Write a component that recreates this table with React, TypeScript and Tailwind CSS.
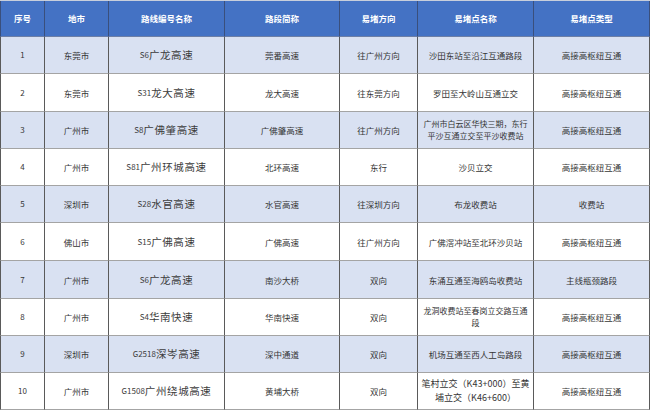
import React from "react";

const cols = "grid-cols-[45px_64px_116px_115px_78px_116px_116px]";

const headers = ["序号", "地市", "路线编号名称", "路段简称", "易堵方向", "易堵点名称", "易堵点类型"];

type Row = {
  no: string;
  city: string;
  code: string;
  road: string;
  short: string;
  dir: string;
  spot: React.ReactNode;
  kind: string;
  h: string;
};

const rows: Row[] = [
  { no: "1", city: "东莞市", code: "S6", road: "广龙高速", short: "莞番高速", dir: "往广州方向", spot: "沙田东站至沿江互通路段", kind: "高接高枢纽互通", h: "h-[37px]" },
  { no: "2", city: "东莞市", code: "S31", road: "龙大高速", short: "龙大高速", dir: "往东莞方向", spot: "罗田至大岭山互通立交", kind: "高接高枢纽互通", h: "h-[38px]" },
  {
    no: "3",
    city: "广州市",
    code: "S8",
    road: "广佛肇高速",
    short: "广佛肇高速",
    dir: "往广州方向",
    spot: (
      <span className="text-[8px]">
        广州市白云区华快三期，东行
        <br />
        平沙互通立交至平沙收费站
      </span>
    ),
    kind: "高接高枢纽互通",
    h: "h-[37px]",
  },
  { no: "4", city: "广州市", code: "S81", road: "广州环城高速", short: "北环高速", dir: "东行", spot: "沙贝立交", kind: "高接高枢纽互通", h: "h-[37px]" },
  { no: "5", city: "深圳市", code: "S28", road: "水官高速", short: "水官高速", dir: "往深圳方向", spot: "布龙收费站", kind: "收费站", h: "h-[37px]" },
  { no: "6", city: "佛山市", code: "S15", road: "广佛高速", short: "广佛高速", dir: "往广州方向", spot: "广佛滘冲站至北环沙贝站", kind: "高接高枢纽互通", h: "h-[38px]" },
  { no: "7", city: "广州市", code: "S6", road: "广龙高速", short: "南沙大桥", dir: "双向", spot: "东涌互通至海鸥岛收费站", kind: "主线瓶颈路段", h: "h-[38px]" },
  {
    no: "8",
    city: "广州市",
    code: "S4",
    road: "华南快速",
    short: "华南快速",
    dir: "双向",
    spot: (
      <span className="text-[8px]">
        龙洞收费站至春岗立交路互通
        <br />
        段
      </span>
    ),
    kind: "高接高枢纽互通",
    h: "h-[37px]",
  },
  { no: "9", city: "深圳市", code: "G2518", road: "深岑高速", short: "深中通道", dir: "双向", spot: "机场互通至西人工岛路段", kind: "高接高枢纽互通", h: "h-[37px]" },
  {
    no: "10",
    city: "广州市",
    code: "G1508",
    road: "广州绕城高速",
    short: "黄埔大桥",
    dir: "双向",
    spot: (
      <span className="text-[9px] leading-[14px]">
        笔村立交（K43+000）至黄
        <br />
        埔立交（K46+600）
      </span>
    ),
    kind: "高接高枢纽互通",
    h: "h-[37px]",
  },
];

const cell =
  "flex items-center justify-center text-center whitespace-nowrap border-r border-b border-r-[#5a5a5a] border-b-[#a4a4a4]";

export default function App() {
  return (
    <div
      className="w-[650px] h-[410px] overflow-hidden bg-white text-[#353535]"
      style={{ fontFamily: '"Noto Sans CJK SC", "Noto Sans", sans-serif' }}
    >
      <div className={`grid ${cols} h-[37px] bg-[#4472c4] border-t border-t-[#c8cfdc]`}>
        {headers.map((h, i) => (
          <div
            key={h}
            className={`flex items-center justify-center border-r border-b border-r-[#3a4f7c] border-b-[#6d7fa6] text-[8.5px] font-bold text-white ${i === 0 ? "border-l border-l-[#3a4f7c]" : ""}`}
          >
            {h}
          </div>
        ))}
      </div>
      {rows.map((r, idx) => (
        <div
          key={r.no}
          className={`grid ${cols} ${r.h} ${idx % 2 === 0 ? "bg-[#d9e1f2]" : "bg-white"} text-[8.5px] leading-[12px]`}
        >
          <div className={`${cell} border-l border-l-[#5a5a5a] text-[8px]`}>{r.no}</div>
          <div className={cell}>{r.city}</div>
          <div className={`${cell} text-[10.5px] tracking-[0.6px] text-[#3c3c3c]`}>
            <span className="text-[8px] tracking-normal">{r.code}</span>
            {r.road}
          </div>
          <div className={cell}>{r.short}</div>
          <div className={cell}>{r.dir}</div>
          <div className={cell}>{r.spot}</div>
          <div className={cell}>{r.kind}</div>
        </div>
      ))}
    </div>
  );
}
